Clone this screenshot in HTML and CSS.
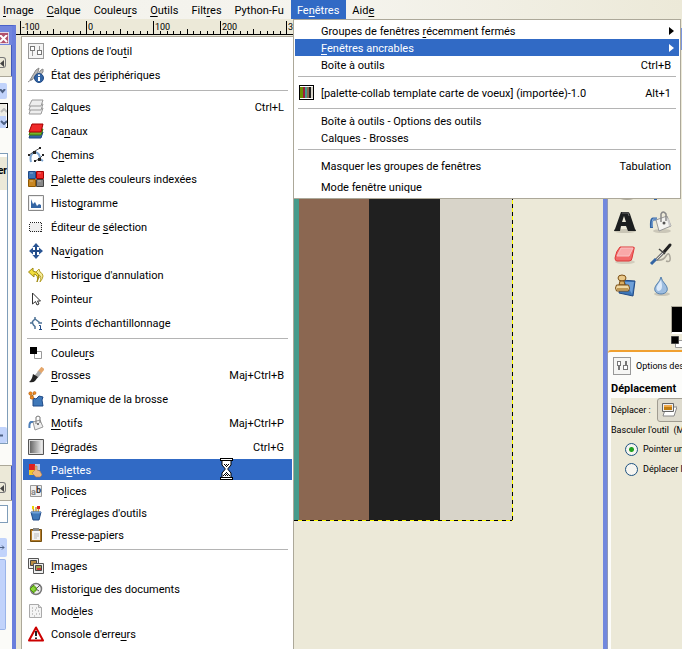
FILE: index.html
```html
<!DOCTYPE html>
<html lang="fr">
<head>
<meta charset="utf-8">
<title>GIMP</title>
<link rel="stylesheet" href="styles.css">
</head>
<body>
<div class="app">
  <nav class="menubar">
    <button><u>I</u>mage</button>
    <button><u>C</u>alque</button>
    <button>Couleu<u>r</u>s</button>
    <button><u>O</u>utils</button>
    <button>Filt<u>r</u>es</button>
    <button>Python-Fu</button>
    <button class="open">Fe<u>n</u>êtres</button>
    <button>Aid<u>e</u></button>
  </nav>

  <div class="workspace">
    <aside class="dock-left">
      <div class="dock-title"><button class="close" aria-label="Fermer"><svg width="8" height="8" viewBox="0 0 8 8"><path d="M0 0l7 7M7 0L0 7" stroke="#fff" stroke-width="2"/></svg></button></div>
      <div class="dock-tabs"><button class="collapse" aria-label="Configurer"><svg width="5" height="7" viewBox="0 0 5 7"><path d="M4 0v7L0 3.500z" fill="#444"/></svg></button></div>
      <div class="dock-body">
        <button class="combo" aria-label="Mode"><svg width="7" height="5" viewBox="0 0 7 5"><path d="M0 0l2.500 3L5 0" fill="none" stroke="#4d6185" stroke-width="2"/></svg></button>
        <div class="spin">
          <button class="up" aria-label="Plus"><svg width="7" height="5" viewBox="0 0 7 5"><path d="M1 4l3-3 3 3" fill="none" stroke="#bbb" stroke-width="2"/></svg></button>
          <button class="down" aria-label="Moins"><svg width="7" height="5" viewBox="0 0 7 5"><path d="M1 1l3 3 3-3" fill="none" stroke="#4d6185" stroke-width="2"/></svg></button>
        </div>
        <div class="list"><b>er</b><button class="combo" aria-label="Suivant"><svg width="5" height="7" viewBox="0 0 5 7"><path d="M0 3.500h3" stroke="#4d6185" stroke-width="2"/></svg></button></div>
      </div>
      <div class="dock-tabs second"><button class="collapse" aria-label="Configurer"><svg width="5" height="7" viewBox="0 0 5 7"><path d="M4 0v7L0 3.500z" fill="#444"/></svg></button></div>
      <div class="dock-body fill">
        <div class="entry"></div>
        <button class="combo tall" aria-label="Suivant"><svg width="5" height="7" viewBox="0 0 5 7"><path d="M0 3.500h4M2 1.500l2 2-2 2" stroke="#4d6185" fill="none"/></svg></button>
        <div class="thumb"></div>
      </div>
    </aside>

    <main class="image-window">
      <svg class="ruler" height="15" width="590" shape-rendering="crispEdges">
        <defs>
          <pattern id="ticks" width="200" height="15" patternUnits="userSpaceOnUse" x="4">
            <path d="M.5 1v13M7.500 11v3M13.500 11v3M20.500 11v3M27.500 11v3M33.500 9v5M40.500 11v3M47.500 11v3M53.500 11v3M60.500 11v3M66.500 1v13M73.500 11v3M80.500 11v3M86.500 11v3M93.500 11v3M100.500 9v5M107.500 11v3M113.500 11v3M120.500 11v3M127.500 11v3M133.500 1v13M140.500 11v3M147.500 11v3M153.500 11v3M160.500 11v3M167.500 9v5M173.500 11v3M180.500 11v3M187.500 11v3M193.500 11v3" stroke="#000"/>
          </pattern>
        </defs>
        <rect width="590" height="15" fill="url(#ticks)"/>
        <path d="M0 14.500h590" stroke="#000"/>
        <text x="6" y="10">-100</text><text x="72" y="10">0</text><text x="139" y="10">100</text><text x="206" y="10">200</text><text x="272" y="10">300</text>
      </svg>
      <div class="canvas">
        <div class="picture"><i class="green"></i><i class="crimson"></i><i class="teal"></i><i class="brown"></i><i class="black"></i><i class="stone"></i></div>
      </div>
    </main>

    <aside class="dock-right">
      <div class="title"></div>
      <div class="tools">
        <button aria-label="Rotation"><svg width="24" height="24" viewBox="0 0 24 24"><ellipse cx="14" cy="19" rx="9" ry="3" fill="#aaa69a"/></svg></button>
        <button aria-label="Perspective"><svg width="24" height="24" viewBox="0 0 24 24"><path d="M5 18h3v4H5z" fill="#3465a4"/></svg></button>
        <button aria-label="Texte"><svg width="24" height="24" viewBox="0 0 24 24"><ellipse cx="12" cy="21" rx="11" ry="2" fill="#c9c5b5"/><path fill-rule="evenodd" d="M8 2h7q1 0 2 2l5 15q1 1 1 2h-8l-2-5H8l-1 5H1q0-1 1-2zM11 6L9 12h4z" fill="#1c1e1f"/><path d="M9 3h6l1 3" fill="none" stroke="#666"/></svg></button>
        <button aria-label="Remplissage"><svg width="24" height="24" viewBox="0 0 24 24"><ellipse cx="13" cy="21" rx="9" ry="2" fill="#cbc7b8"/><path d="M8 9H4Q2 9 2.500 18" fill="none" stroke="#3465a4" stroke-width="3"/><path d="M8 9H4Q3 10 3 17" fill="none" stroke="#8db3df"/><path d="M7 10l11-4 4 10-12 5z" fill="#f4f4f1" stroke="#999"/><path d="M19 9l2 7" stroke="#ccc" stroke-width="2"/><path d="M12 12V4q2-4 5 0v7" fill="none" stroke="#888" stroke-width="1.500"/><circle cx="15" cy="13" r="1.500" fill="#555"/></svg></button>
        <button aria-label="Gomme"><svg width="24" height="24" viewBox="0 0 24 24"><ellipse cx="12" cy="20" rx="10" ry="2" fill="#d2cdbd"/><path d="M7 5h13q2 0 1 2l-2 9q0 3-3 3H4q-2 0-2-3 1-7 5-11z" fill="#f26a6a" stroke="#dd3a3a"/><path d="M8 6h12l-4 8H4z" fill="#f9a8a8" stroke="#f8c4c4"/></svg></button>
        <button aria-label="Aérographe"><svg width="24" height="24" viewBox="0 0 24 24"><path d="M8 18q6 1 9-4t4 1-4 4" fill="none" stroke="#aaa69a" stroke-width="1.500"/><path d="M21 3l-6 7" stroke="#222" stroke-width="3" stroke-linecap="round"/><path d="M15 10l-8 8" stroke="#777" stroke-width="3"/><path d="M15 10l-8 8" stroke="#ddd"/><path d="M10 7l6 5" fill="none" stroke="#444" stroke-width="1.500"/><path d="M7 17l-5 5" stroke="#3465a4" stroke-width="3"/></svg></button>
        <button aria-label="Clonage"><svg width="24" height="24" viewBox="0 0 24 24"><path d="M8 6l14 1-2 15-14-3z" fill="#3d76b8" stroke="#204a87"/><path d="M12 8l9 0-2 12z" fill="#6fa0d8"/><ellipse cx="9" cy="4" rx="4" ry="3" fill="#e9c889" stroke="#7b4f16"/><path d="M7 7h4l1 4H6z" fill="#d9ad62" stroke="#7b4f16"/><path d="M3.500 11h12q2 3 0 6h-12q-2-3 0-6z" fill="#f0d8a3" stroke="#7b4f16"/><path d="M4 15h11" stroke="#8f5902"/></svg></button>
        <button aria-label="Flou"><svg width="24" height="24" viewBox="0 0 24 24"><ellipse cx="13" cy="20" rx="8" ry="2" fill="#cbc7b8"/><path d="M12 3q1 4 4 7c5 6 1 10-4 10S3 16 8 10q3-3 4-7z" fill="#9dbde0" stroke="#5580ad"/><path d="M12 6c-4 6-6 8-3 11 4 0 5-4 3-11z" fill="#dceafa"/></svg></button>
      </div>
      <div class="colors">
        <div class="swatch"></div>
        <svg width="12" height="12" viewBox="0 0 12 12"><path d="M4.500 4.500h10v7h-10z" fill="#fff" stroke="#999"/><path d="M.5.500h7v7h-7z" fill="#000" stroke="#444"/></svg>
      </div>
      <div class="tab">
        <span class="tab-icon"><svg width="14" height="14" viewBox="0 0 14 14" shape-rendering="crispEdges"><g fill="#fff" stroke="#777"><path d="M2.500 2.500h3v4h-3zM8.500 6.500h4v4h-4z"/><path d="M4 7v4M10.500 2v4" stroke-width="2"/></g></svg></span>
        <span>Options des outils</span>
      </div>
      <div class="options">
        <h2>Déplacement</h2>
        <div class="row"><span>Déplacer :</span>
          <button class="toggle" aria-label="Calque"><svg width="16" height="16" viewBox="0 0 16 16"><path d="M5 5h11l-3 9H2z" fill="#fff" stroke="#888"/><path d="M1.500 1.500h11v8h-11z" fill="#eee" stroke="#666"/><path d="M3 3h8v5H3z" fill="#c17d11"/><path d="M3 3h8v2H3z" fill="#f0a94a"/></svg></button></div>
        <div class="legend">Basculer l'outil&nbsp; (Maj)</div>
        <label><input type="radio" name="mode" checked>Pointer un calque</label>
        <label><input type="radio" name="mode">Déplacer le calque</label>
      </div>
    </aside>
  </div>

  <div class="menu menu-windows" role="menu">
    <button class="tight"><span>Groupes de fenêtres <u>r</u>écemment fermés</span><svg class="arrow" width="5" height="8" viewBox="0 0 5 8"><path d="M0 0l5 4-5 4z" fill="currentColor"/></svg></button>
    <button class="tight selected"><span><u>F</u>enêtres ancrables</span><svg class="arrow" width="5" height="8" viewBox="0 0 5 8"><path d="M0 0l5 4-5 4z" fill="currentColor"/></svg></button>
    <button class="tight"><span>Boîte à outils</span><kbd>Ctrl+B</kbd></button>
    <hr>
    <button><svg class="icon" viewBox="0 0 16 16" shape-rendering="crispEdges"><path fill="#fff" stroke="#000" d="M.5.500h14v14H.5z"/><path fill="#6b8e00" d="M1 2h3v11H1z"/><path fill="#9c1c3c" d="M4 2h2v11H4z"/><path fill="#479b8b" d="M6 2h2v11H6z"/><path fill="#8b6751" d="M8 2h2v11H8z"/><path fill="#202020" d="M10 2h2v11h-2z"/><path fill="#d8d4c9" d="M12 2h2v11h-2z"/></svg><span>[palette-collab template carte de voeux] (importée)-1.0</span><kbd>Alt+1</kbd></button>
    <hr>
    <button class="tight"><span>Boîte à outils - Options des outils</span></button>
    <button class="tight"><span>Calques - Brosses</span></button>
    <hr>
    <button><span>Masquer les groupes de fenêtres</span><kbd>Tabulation</kbd></button>
    <button class="tight"><span>Mode fenêtre unique</span></button>
  </div>

  <div class="menu menu-docks" role="menu">
    <button><svg class="icon" viewBox="0 0 16 16" shape-rendering="crispEdges"><path d="M.5.500h15v15H.5z" fill="#f4f4f4" stroke="#999"/><path d="M2.500 3.500h4v4h-4zM9.500 7.500h4v4h-4z" fill="#fff" stroke="#777"/><path d="M4.500 8v5M11.500 3v4" stroke="#999" stroke-width="1"/></svg><span>Options de l'ou<u>t</u>il</span></button>
    <button><svg class="icon" viewBox="0 0 16 16"><path d="M2 13L8 3l3-2-1 4-6 8zM6 12l7-9 2-1v3l-5 6" fill="#bbb" stroke="#888"/><path d="M0 15l4-3" stroke="#888"/><circle cx="11" cy="11" r="4.500" fill="#3465a4" stroke="#204a87"/><path d="M11 10v4M11 7.500v1.500" stroke="#fff" stroke-width="2"/></svg><span>État des p<u>é</u>riphériques</span></button>
    <hr>
    <button><svg class="icon" viewBox="0 0 16 16"><g fill="#eee" stroke="#999"><path d="M3 9h12l-2 6H1z"/><path d="M3 5h12l-2 6H1z"/><path d="M4 1h11l-2 6H1z"/></g></svg><span><u>C</u>alques</span><kbd>Ctrl+L</kbd></button>
    <button><svg class="icon" viewBox="0 0 16 16"><path d="M3 9h12l-2 6H1z" fill="#3465a4" stroke="#204a87"/><path d="M3 6h12l-2 6H1z" fill="#73b52c" stroke="#3d7a08"/><path d="M4 1h11l-2 8H1z" fill="#ef2929" stroke="#a40000"/></svg><span>Ca<u>n</u>aux</span></button>
    <button><svg class="icon" viewBox="0 0 16 16"><path d="M3 15q-2-8 4-10 5 1 5 7l3 2" fill="none" stroke="#7ba3d0" stroke-width="2"/><path d="M1 8l6-4 5-3M15 8l-4 4-4 2" stroke="#555" fill="none"/><path d="M5 4h3v3H5zM10 11h3v3h-3zM11 0h2v2h-2zM14 7h2v2h-2zM0 7h2v2H0zM6 13h2v2H6z" fill="#222"/></svg><span>C<u>h</u>emins</span></button>
    <button><svg class="icon" viewBox="0 0 16 16"><path d="M.5.500h7v7h-7z" fill="#3f75b5" stroke="#204a87"/><path d="M8.500.500h7v7h-7z" fill="#ef2929" stroke="#a40000"/><path d="M.5 8.500h7v7h-7z" fill="#c98722" stroke="#8f5902"/><path d="M8.500 8.500h7v7h-7z" fill="#888" stroke="#444"/><path d="M2 2h3M10 2h3M2 10h3M10 10h3" stroke="#fff" opacity=".4"/></svg><span><u>P</u>alette des couleurs indexées</span></button>
    <button><svg class="icon" viewBox="0 0 16 16"><path d="M.5.500h15v15H.5z" fill="#eee" stroke="#888"/><path d="M2 2h12v12H2z" fill="#fff"/><path d="M3 13V4l2 5 2-2 2 4 2-2 2 1v3z" fill="#3465a4"/></svg><span>Histo<u>g</u>ramme</span></button>
    <button><svg class="icon" viewBox="0 0 16 16" shape-rendering="crispEdges"><path d="M1.500 3.500h12v9h-12z" fill="#eee" stroke="#222" stroke-dasharray="1 1"/></svg><span>Éditeur de <u>s</u>élection</span></button>
    <button><svg class="icon" viewBox="0 0 16 16"><path d="M8 2v12M2 8h12" stroke="#204a87" stroke-width="2"/><path d="M8 0l3.500 4h-7zM8 16l3.500-4h-7zM1 8l4-3.500v7zM15 8l-4-3.500v7z" fill="#2a5594"/></svg><span>Na<u>v</u>igation</span></button>
    <button><svg class="icon" viewBox="0 0 16 16"><path d="M11 2L7 6l4 5V8q3 1 1 7 6-7 0-10z" fill="#f5ec9b" stroke="#b9a22c"/><path d="M5 1L.5 5 6 10V7q5 1 3 8Q14 6 5 4z" fill="#f3df3e" stroke="#a08a10"/></svg><span>Histori<u>q</u>ue d'annulation</span></button>
    <button><svg class="icon" viewBox="0 0 16 16"><path d="M4.500 2v11l3-2.500L9 14l2-1-1.500-3h3z" fill="#fff" stroke="#333"/></svg><span>Pointeur</span></button>
    <button><svg class="icon" viewBox="0 0 16 16"><path d="M2 8h2.500V6.500L7 4V2M7 4l4 3v1h3M4.500 8l1 2L7 11.500V14" fill="none" stroke="#4d7296" stroke-width="1.500"/><path d="M11 10.500h1.500v4M11 14.500h3" fill="none" stroke="#204a87"/></svg><span><u>P</u>oints d'échantillonnage</span></button>
    <hr>
    <button class="short"><svg class="icon" viewBox="0 0 16 16"><path d="M6.500 6.500h7v7h-7z" fill="#fff" stroke="#999"/><path d="M2 2h7v7H2z"/></svg><span>Couleu<u>r</u>s</span></button>
    <button><svg class="icon" viewBox="0 0 16 16"><path d="M15 1l-4 5" stroke="#e4a66b" stroke-width="4"/><path d="M12 5l-4 5" stroke="#aaa" stroke-width="4"/><path d="M5 7l5 3-3 4q-2 2-6 1 3-2 4-8z" fill="#222"/></svg><span><u>B</u>rosses</span><kbd>Maj+Ctrl+B</kbd></button>
    <button><svg class="icon" viewBox="0 0 16 16"><path d="M5 7l3 1 3-3 4 1-1 3 1 6H5z" fill="#3f78b9" stroke="#204a87"/><path d="M2 3l2 3 2-4M3 5v3" stroke="#8f5902" fill="none"/><g fill="#f08a20" stroke="#a65000" stroke-width=".5"><circle cx="2.500" cy="2.500" r="1.700"/><circle cx="6.500" cy="2" r="1.500"/><circle cx="4" cy="6.500" r="1.700"/></g></svg><span>Dynamique de la brosse</span></button>
    <button><svg class="icon" viewBox="0 0 16 16"><path d="M6 7H3Q1 8 1.500 13" fill="none" stroke="#4d7fb9" stroke-width="2"/><path d="M5 7l7-2 3 7-8 3z" fill="#eee" stroke="#999"/><path d="M8 9V2q2-2 4 0v6" fill="none" stroke="#777"/><circle cx="10" cy="9" r="1" fill="#555"/></svg><span><u>M</u>otifs</span><kbd>Maj+Ctrl+P</kbd></button>
    <button><svg class="icon" viewBox="0 0 16 16"><defs><linearGradient id="grad"><stop stop-color="#666"/><stop offset="1" stop-color="#eee"/></linearGradient></defs><path d="M.5.500h15v15H.5z" fill="#ddd" stroke="#555"/><path d="M2 2h12v12H2z" fill="url(#grad)"/></svg><span><u>D</u>égradés</span><kbd>Ctrl+G</kbd></button>
    <button class="selected"><svg class="icon" viewBox="0 0 16 16"><path d="M1 2h6v6H1z" fill="#e02020"/><path d="M7 2h5v6H7z" fill="#b8c8e8"/><path d="M1 8h6v5H1z" fill="#f1c62a"/><path d="M7 8V4h2v4l3 1 2 4-2 2H8l-4-4 1-1z" fill="#eab785" stroke="#b87b42" stroke-width=".6"/></svg><span>Pal<u>e</u>ttes</span></button>
    <button class="mid"><svg class="icon" viewBox="0 0 16 16"><path d="M2.500 2.500h11v11h-11z" fill="#eee" stroke="#999"/><text class="glyph" x="3" y="12">a</text><text class="glyph dark" x="8" y="10">b</text></svg><span>Po<u>l</u>ices</span></button>
    <button class="mid"><svg class="icon" viewBox="0 0 16 16"><path d="M5 2l1 6M8 2v6M11 1l-1 7" stroke="#c99b39" stroke-width="1.500"/><path d="M5 1v3" stroke="#edd400" stroke-width="2"/><path d="M10.500 1v3" stroke="#e02020" stroke-width="3"/><path d="M3 7h10l-2 8H5z" fill="#3f78b9" stroke="#204a87"/><ellipse cx="8" cy="7.500" rx="5" ry="1" fill="#6f9fd6"/></svg><span>Préréglages d'outils</span></button>
    <button class="mid"><svg class="icon" viewBox="0 0 16 16"><path d="M2.500 2.500h11v12h-11z" fill="#b37c2c" stroke="#76500f"/><path d="M4 4h8v9H4z" fill="#f4f4f4"/><path d="M5 1h6v3H5z" fill="#888"/><path d="M6 7h5M6 9h5M6 11h3" stroke="#bbb"/></svg><span>Presse-p<u>a</u>piers</span></button>
    <hr>
    <button><svg class="icon" viewBox="0 0 16 16"><path d="M.5.500h10v10H.5z" fill="#eee" stroke="#555"/><path d="M2.500 2.500h6v5h-6z" fill="#b98b40" stroke="#444"/><path d="M5.500 5.500h10v10h-10z" fill="#eee" stroke="#555"/><path d="M7.500 7.500h6v5h-6z" fill="#a3a050" stroke="#444"/><path d="M9 10h4v2H9z" fill="#c33"/></svg><span><u>I</u>mages</span></button>
    <button class="mid"><svg class="icon" viewBox="0 0 16 16"><circle cx="8" cy="8" r="5.500" fill="#eee" stroke="#777" stroke-width="1.500"/><path d="M8 8l4-4M8 8l3 2" stroke="#555"/><path d="M2 8l4-4v2h2v4H6v2z" fill="#8ad53c" stroke="#4e9a06"/></svg><span>Histori<u>q</u>ue des documents</span></button>
    <button class="mid"><svg class="icon" viewBox="0 0 16 16"><path d="M1.500 1.500h9l3 3v10h-12z" fill="#f4f4f4" stroke="#aaa"/><path d="M10.500 1.500v3h3" fill="#ddd" stroke="#aaa"/><path d="M4 5h1M8 5h1M4 8h1M7 7h1M10 8h1M4 11h1M8 11h1M11 11h1M6 13h1" stroke="#999"/></svg><span>Mod<u>è</u>les</span></button>
    <button><svg class="icon" viewBox="0 0 16 16"><path d="M8 1.500L15 14.500H1z" fill="#fff" stroke="#c00" stroke-width="2" stroke-linejoin="round"/><path d="M8 5v5M8 11.500v1.500" stroke="#222" stroke-width="2"/></svg><span>Console d'erre<u>u</u>rs</span></button>
  </div>

  <svg class="cursor" width="13" height="22" viewBox="0 0 13 22"><path d="M2 2h9v5L8 10.500v1L11 15v5H2v-5l3-3.500v-1L2 7z" fill="#fff" stroke="#000"/><path d="M0 0h13v3H0zM0 19h13v3H0z"/><path d="M1 1.500h11M1 20.500h11" stroke="#fff"/><path d="M4 6.500h1m1 0h1m1 0h1M5 7.500h1m1 0h1M6 8.500h1M6 14.500h1M5 15.500h1m1 0h1M4 16.500h1m1 0h1m1 0h1M3 17.500h1m1 0h1m1 0h1m1 0h1" stroke="#000"/></svg>
</div>
</body>
</html>
```

FILE: styles.css
```css
* { box-sizing: border-box; }

body {
  margin: 0;
  background: #ece9d8;
  color: #000;
  font: 11px/16px Roboto, Tahoma, sans-serif;
}

button {
  margin: 0;
  padding: 0;
  border: 0;
  background: none;
  color: inherit;
  font: inherit;
  text-align: left;
  white-space: nowrap;
}

svg { display: block; flex: none; }

u { text-underline-offset: 2px; }

.app {
  position: relative;
  display: flex;
  flex-direction: column;
  height: 100vh;
  overflow: hidden;
}

.menubar {
  display: flex;
  flex: none;
  height: 19px;
  margin-left: -3px;
  background: linear-gradient(90deg, #f3f2ec, #f5f4ee 50%, #ece9d8);
}

.menubar button { padding: 2px 7px 0 6px; }
.menubar .open { background: #316ac5; color: #fff; }

.workspace { display: flex; flex: 1; min-height: 0; }

/* Left dock */
.dock-left {
  display: flex;
  flex-direction: column;
  flex: none;
  width: 16px;
  margin-top: 6px;
  border-right: 4px solid #6a7fdc;
  border-top: 1px solid #4a62c8;
  box-shadow: inset -1px 0 #4058b8;
  overflow: hidden;
}

.dock-title { height: 19px; padding-top: 6px; background: #7286dd; }
.close { display: block; width: 9px; height: 12px; padding-top: 2px; background: #b3516b; border: 1px solid #e8d8e4; border-left: 0; }
.dock-tabs { height: 32px; padding-top: 12px; border-bottom: 1px solid #aca899; }
.dock-tabs.second { height: 36px; padding-top: 16px; border-top: 1px solid #aca899; }
.collapse { display: block; width: 6px; height: 11px; padding-top: 1px; border: 1px solid #777; border-left: 0; border-radius: 0 3px 3px 0; }
.dock-body { height: 388px; padding-top: 6px; background: #fbfbf8; }
.dock-body.fill { flex: 1; padding-top: 4px; }
.combo { display: flex; align-items: center; width: 7px; height: 16px; background: #c1d3fb; border-radius: 0 2px 2px 0; }
.spin { width: 8px; height: 25px; margin-top: 4px; border: 1px solid #000; border-left: 0; }
.spin button { display: flex; align-items: center; width: 6px; height: 12px; }
.spin .up { background: #eeede5; }
.spin .down { background: #c1d3fb; }
.list { display: flex; flex-direction: column; justify-content: space-between; width: 8px; height: 291px; margin-top: 25px; padding: 3px 0 0; border: 1px solid #7f9db9; border-left: 0; background: #fff; overflow: hidden; }
.list b { height: 33px; padding-top: 6px; background: #ece9d8; direction: rtl; font-size: 10px; }
.entry { width: 8px; height: 18px; border: 1px solid #7f9db9; border-left: 0; background: #fff; }
.combo.tall { height: 19px; margin-top: 15px; }
.thumb { width: 6px; height: 71px; margin-top: 2px; background: #c1d3fb; border: 1px solid #9ab4e8; border-left: 0; border-radius: 0 2px 2px 0; }

/* Image window */
.image-window { flex: 1; min-width: 0; overflow: hidden; }
.ruler { margin-top: 1px; }
.ruler text { font-size: 9px; }
.canvas { padding: 1px 0 0 70px; }
.picture {
  display: grid;
  grid-template-columns: 71px 71px 71px 70px 71px 72px;
  width: 427px;
  height: 485px;
  padding: 0 1px 1px 0;
  background:
    repeating-linear-gradient(180deg, #000 0 4px, #ff0 4px 8px) right / 1px 100% no-repeat,
    repeating-linear-gradient(90deg, #000 0 4px, #ff0 4px 8px) bottom / 100% 1px no-repeat;
}
.green { background: #6b8e00; }
.crimson { background: #9c1c3c; }
.teal { background: #479b8b; }
.brown { background: #8b6751; }
.black { background: #202020; }
.stone { background: #d8d4c9; }

/* Right dock */
.dock-right {
  flex: none;
  width: 79px;
  margin-top: 9px;
  border-left: 4px solid #7288dd;
  box-shadow: inset 1px 0 #8e97b8;
  overflow: hidden;
  white-space: nowrap;
}
.dock-right .title { height: 22px; background: #7a96df; }
.tools { display: grid; grid-template-columns: 36px 36px; grid-auto-rows: 32px; padding-top: 124px; }
.tools button { display: grid; place-items: center; }
.colors { height: 48px; padding: 4px 0 0 64px; }
.swatch { height: 28px; margin-bottom: 2px; background: #000; border: 1px solid #aca899; border-bottom: 2px solid #fff; border-right: 0; }
.tab { display: flex; align-items: center; gap: 5px; height: 30px; margin-left: 1px; padding-left: 5px; background: #fcfcfa; border-top: 2px solid #f0a030; border-radius: 3px 0 0 0; font-size: 9px; }
.tab-icon { padding: 1px; border: 1px solid #999; background: #f6f6f4; }
.options { height: 500px; margin-left: 1px; border-left: 3px solid #fcfcfa; font-size: 9px; line-height: 20px; }
.options h2 { margin: 0; background: #fcfcfa; font-size: 11px; line-height: 18px; }
.row { display: flex; align-items: center; gap: 6px; height: 23px; }
.toggle { flex: none; width: 30px; height: 24px; padding: 3px; border: 1px solid #a09c90; border-radius: 3px; background: #dedbce; }
.legend { line-height: 18px; }
.options label { display: flex; align-items: center; gap: 5px; padding-left: 14px; }
.options input { appearance: none; flex: none; width: 13px; height: 13px; margin: 0; border: 1px solid #1d5281; border-radius: 50%; background: #f6f5f0; }
.options input:checked { background: radial-gradient(circle, #21a121 0 2px, #f6f5f0 3px); }

/* Drop-down menus */
.menu {
  position: absolute;
  display: flex;
  flex-direction: column;
  background: #fff;
  border: 1px solid #aca899;
  padding: 2px 1px;
}
.menu button { display: flex; align-items: center; height: 24px; flex: none; }
.menu .mid { height: 22px; }
.menu .short { height: 20px; }
.menu .selected { background: #316ac5; color: #fff; }
.menu span { flex: 1; padding-top: 2px; }
.menu kbd { padding-top: 2px; font: inherit; }
.menu hr { width: auto; height: 1px; margin: 3px 4px 4px; border: 0; background: #b4b4b4; flex: none; }
.icon { width: 16px; height: 16px; }
.glyph { font-size: 9px; font-weight: bold; fill: #888; }
.glyph.dark { fill: #333; }

.menu-windows { top: 19px; left: 293px; width: 388px; padding-bottom: 3px; }
.menu-windows hr { margin: 3px; }
.menu-windows button { height: 25px; padding: 0 8px 0 26px; }
.menu-windows .tight { height: 17px; }
.menu-windows .icon { margin: 0 6px 0 -22px; }
.arrow { margin-right: -3px; }

.menu-docks { top: 36px; left: 21px; width: 273px; height: 620px; }
.menu-docks button { padding: 0 8px 0 5px; gap: 7px; }
.menu-docks .selected { height: 21px; }

.cursor { position: absolute; left: 220px; top: 458px; }
```
